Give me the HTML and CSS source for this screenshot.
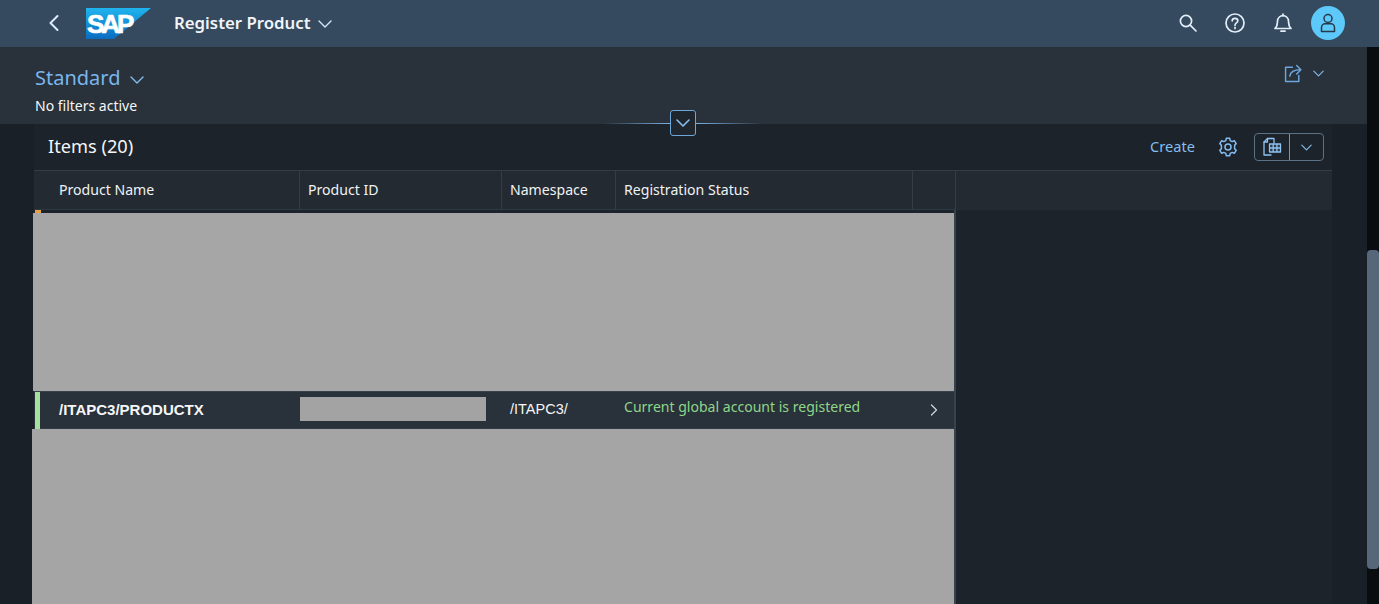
FILE: index.html
```html
<!DOCTYPE html>
<html lang="en">
<head>
<meta charset="UTF-8">
<meta name="viewport" content="width=device-width, initial-scale=1.0">
<title>Register Product</title>
<link rel="stylesheet" href="styles.css">
</head>
<body>
  <header class="shell">
    <div class="shell-left">
      <svg class="back-icon" viewBox="0 0 12 18"><path d="M9.5 2 L2.5 9 L9.5 16"/></svg>
      <svg class="sap-logo" viewBox="0 0 65 31">
        <defs>
          <linearGradient id="sapBlue" x1="0" y1="0" x2="0" y2="1">
            <stop offset="0" stop-color="#1fb4ee"/>
            <stop offset="1" stop-color="#0a6cc0"/>
          </linearGradient>
        </defs>
        <polygon points="0,0 65,0 28,31 0,31" fill="url(#sapBlue)"/>
        <text x="1" y="25" class="sap-text">SAP</text>
      </svg>
      <span class="app-title">Register Product</span>
      <svg class="chev chev-title" viewBox="0 0 14 8"><path d="M1 1 L7 7 L13 1"/></svg>
    </div>
    <div class="shell-right">
      <svg class="shell-icon" viewBox="0 0 20 20"><circle cx="8" cy="8" r="5.6"/><path d="M12.2 12.2 L18 18"/></svg>
      <svg class="shell-icon" viewBox="0 0 20 20"><circle cx="10" cy="10" r="9"/><path d="M7.2 7.8 C7.2 4.6 12.8 4.6 12.8 7.8 C12.8 10 10 9.8 10 12.2"/><path d="M10 14.4 L10 15.4"/></svg>
      <svg class="shell-icon" viewBox="0 0 20 20"><path d="M2 15.5 C4.5 13.5 4.2 11 4.5 8 C4.8 4.6 7.4 2.6 10 2.6 C12.6 2.6 15.2 4.6 15.5 8 C15.8 11 15.5 13.5 18 15.5 Z"/><path d="M8 18.2 L12 18.2"/><path d="M10 1 L10 2.6"/></svg>
      <div class="avatar">
        <svg class="avatar-icon" viewBox="0 0 16 20"><circle cx="8" cy="5.5" r="4"/><path d="M1.5 18.5 L1.5 14.5 C1.5 12 3.5 10.8 5 10.8 L11 10.8 C12.5 10.8 14.5 12 14.5 14.5 L14.5 18.5 Z"/></svg>
      </div>
    </div>
  </header>

  <div class="workarea">
    <main class="page">
      <section class="filterbar">
        <div class="variant">
          <div class="variant-row">
            <span class="variant-name">Standard</span>
            <svg class="chev chev-variant" viewBox="0 0 14 8"><path d="M1 1 L7 7 L13 1"/></svg>
          </div>
          <div class="filter-text">No filters active</div>
        </div>
        <div class="share">
          <svg class="share-icon" viewBox="0 0 18 18"><path d="M8 3 L1.5 3 L1.5 16.5 L14 16.5 L14 11"/><path d="M5.5 11.5 C6 7.5 9 5.5 15.5 5.5"/><path d="M12 1.5 L16 5.5 L12 9.5"/></svg>
          <svg class="chev chev-small" viewBox="0 0 14 8"><path d="M1 1 L7 7 L13 1"/></svg>
        </div>
        <div class="collapse">
          <span class="collapse-line collapse-line-left"></span>
          <button class="collapse-btn"><svg class="chev chev-collapse" viewBox="0 0 14 8"><path d="M1 1 L7 7 L13 1"/></svg></button>
          <span class="collapse-line collapse-line-right"></span>
        </div>
      </section>

      <section class="panel">
        <div class="toolbar">
          <h2 class="table-title">Items (20)</h2>
          <div class="toolbar-actions">
            <a class="create-link">Create</a>
            <svg class="gear-icon" viewBox="0 0 20 20">
              <circle cx="10" cy="10" r="3"/>
              <path d="M8.3 1.3 L11.7 1.3 L12.2 3.6 L14.2 4.6 L16.3 3.7 L18.2 6.6 L16.6 8.2 L16.6 11.8 L18.2 13.4 L16.3 16.3 L14.2 15.4 L12.2 16.4 L11.7 18.7 L8.3 18.7 L7.8 16.4 L5.8 15.4 L3.7 16.3 L1.8 13.4 L3.4 11.8 L3.4 8.2 L1.8 6.6 L3.7 3.7 L5.8 4.6 L7.8 3.6 Z"/>
            </svg>
            <div class="export-btn">
              <span class="export-main">
                <svg class="export-icon" viewBox="0 0 20 20">
                  <path d="M9 1.5 L5.5 1.5 L2 5 L2 18 L9 18"/>
                  <path d="M5.5 1.5 L5.5 5 L2 5"/>
                  <path d="M9 1.5 L12 1.5 L12 6"/>
                  <path class="export-grid" d="M7.5 7 L18.5 7 L18.5 15 L7.5 15 Z M7.5 11 L18.5 11 M11.2 7 L11.2 15 M14.9 7 L14.9 15"/>
                </svg>
              </span>
              <span class="export-arrow"><svg class="chev chev-small" viewBox="0 0 14 8"><path d="M1 1 L7 7 L13 1"/></svg></span>
            </div>
          </div>
        </div>

        <div class="table-head">
          <div class="th th-name">Product Name</div>
          <div class="th th-id">Product ID</div>
          <div class="th th-ns">Namespace</div>
          <div class="th th-status">Registration Status</div>
          <div class="th th-nav"></div>
        </div>

        <div class="table-body">
          <div class="table-col">
            <div class="hdr-gap"><span class="warn-tick"></span></div>
            <div class="redact redact-top"></div>
            <div class="row">
              <span class="row-mark"></span>
              <div class="td td-name">/ITAPC3/PRODUCTX</div>
              <div class="td td-id"><span class="redact-cell"></span></div>
              <div class="td td-ns">/ITAPC3/</div>
              <div class="td td-status">Current global account is registered</div>
              <div class="td td-nav"><svg class="nav-icon" viewBox="0 0 8 12"><path d="M1.5 1 L6.5 6 L1.5 11"/></svg></div>
            </div>
            <div class="redact redact-bottom"></div>
          </div>
        </div>
      </section>
    </main>
    <div class="scrollbar"><div class="scroll-thumb"></div></div>
  </div>
</body>
</html>
```

FILE: styles.css
```css
* {
  box-sizing: border-box;
}

body {
  display: flex;
  flex-direction: column;
  width: 1379px;
  height: 604px;
  margin: 0;
  overflow: hidden;
  background-color: #1a2027;
  color: #fff;
  font-family: "Noto Sans", Arial, sans-serif;
}

svg {
  display: block;
  fill: none;
  stroke-linecap: round;
  stroke-linejoin: round;
}

.chev {
  stroke: #d1e8ff;
  stroke-width: 1.4;
}

/* shell bar */
.shell {
  display: flex;
  justify-content: space-between;
  align-items: center;
  flex: none;
  height: 47px;
  padding: 0 34px 1px 48px;
  background-color: #354a5f;
}

.shell-left,
.shell-right {
  display: flex;
  align-items: center;
}

.back-icon {
  width: 12px;
  height: 18px;
  stroke: #dcecfb;
  stroke-width: 2;
}

.sap-logo {
  width: 65px;
  height: 31px;
  margin: 1px 0 0 26px;
}

.sap-text {
  fill: #fff;
  stroke: #fff;
  stroke-width: 0.7;
  font-family: "Liberation Sans", Arial, sans-serif;
  font-size: 26px;
  font-weight: 700;
  letter-spacing: -3px;
}

.app-title {
  margin: 0 0 2px 23px;
  font-size: 16.8px;
  font-weight: 600;
  color: #f2f5f8;
}

.chev-title {
  width: 14px;
  height: 8px;
  margin: 2px 0 0 8px;
}

.shell-right {
  gap: 27.5px;
}

.shell-icon {
  width: 20px;
  height: 20px;
  stroke: #e3eef8;
  stroke-width: 1.7;
}

.avatar {
  display: flex;
  justify-content: center;
  align-items: center;
  width: 34px;
  height: 34px;
  margin-left: -9px;
  border-radius: 50%;
  background-color: #5dc8fa;
}

.avatar-icon {
  width: 16px;
  height: 20px;
  stroke: #26384a;
  stroke-width: 1.5;
}

/* page */
.workarea {
  display: flex;
  flex: 1;
  min-height: 0;
}

.page {
  display: flex;
  flex-direction: column;
  flex: 1;
  min-width: 0;
}

.filterbar {
  position: relative;
  display: flex;
  justify-content: space-between;
  flex: none;
  height: 77px;
  padding: 17px 43px 0 35px;
  background-color: #29313a;
}

.variant-row {
  display: flex;
  align-items: center;
}

.variant-name {
  font-size: 20px;
  line-height: 28px;
  color: #7ab6ec;
}

.chev-variant {
  width: 14px;
  height: 8px;
  margin: 3px 0 0 10px;
  stroke: #84bdf0;
}

.filter-text {
  margin-top: 4px;
  font-size: 14px;
  line-height: 20px;
  color: #f5f6f7;
}

.share {
  display: flex;
  align-items: flex-start;
  gap: 10px;
}

.share-icon {
  width: 19px;
  height: 19px;
  stroke: #6ba7de;
  stroke-width: 1.4;
}

.chev-small {
  width: 11px;
  height: 7px;
  margin-top: 6px;
  stroke: #84bdf0;
}

/* sits over the border between filter bar and table */
.collapse {
  position: absolute;
  left: 603px;
  top: 63px;
  display: flex;
  align-items: center;
  width: 160px;
  height: 26px;
}

.collapse-line {
  flex: 1;
  height: 1px;
}

.collapse-line-left {
  background: linear-gradient(to right, rgba(122, 176, 226, 0), #7ab0e2);
}

.collapse-line-right {
  background: linear-gradient(to left, rgba(122, 176, 226, 0), #7ab0e2);
}

.collapse-btn {
  display: flex;
  justify-content: center;
  align-items: center;
  flex: none;
  width: 26px;
  height: 26px;
  padding: 0;
  border: 1px solid #6fa6d8;
  border-radius: 3px;
  background-color: #1f262e;
}

.chev-collapse {
  width: 14px;
  height: 8px;
  stroke: #84bdf0;
  stroke-width: 1.6;
}

/* table panel */
.panel {
  display: flex;
  flex-direction: column;
  flex: 1;
  min-height: 0;
  margin: 0 35px 0 34px;
  background-color: #1d232a;
}

.toolbar {
  display: flex;
  justify-content: space-between;
  align-items: center;
  flex: none;
  height: 47px;
  padding: 0 8px 2px 14px;
  border-bottom: 1px solid #333d47;
}

.table-title {
  margin: 0;
  font-size: 18.2px;
  font-weight: 400;
  color: #f5f6f7;
}

.toolbar-actions {
  display: flex;
  align-items: center;
}

.create-link {
  font-size: 14.6px;
  color: #84bdf0;
}

.gear-icon {
  width: 20px;
  height: 20px;
  margin: 2px 16px 0 23px;
  stroke: #84bdf0;
  stroke-width: 1.5;
}

.export-btn {
  display: flex;
  width: 70px;
  height: 28px;
  margin-top: 2px;
  border: 1px solid #5a7186;
  border-radius: 4px;
}

.export-main {
  display: flex;
  justify-content: center;
  align-items: center;
  width: 35px;
  border-right: 1px solid #7d93a8;
}

.export-icon {
  width: 20px;
  height: 20px;
  stroke: #8fc3f2;
  stroke-width: 1.3;
}

.export-grid {
  fill: #2c3947;
}

.export-arrow {
  display: flex;
  justify-content: center;
  flex: 1;
  padding-top: 4px;
}

.table-head {
  display: flex;
  flex: none;
  height: 39px;
  background-color: #232a31;
}

.th {
  display: flex;
  align-items: center;
  padding: 0 0 1px 8px;
  border-right: 1px solid #333d47;
  border-bottom: 1px solid #2f3943;
  font-size: 14.1px;
  color: #f0f2f4;
}

.th-name {
  width: 266px;
  padding-left: 25px;
}

.th-id {
  width: 202px;
}

.th-ns {
  width: 114px;
}

.th-status {
  width: 297px;
}

.th-nav {
  width: 43px;
}

.table-body {
  flex: 1;
  min-height: 0;
}

.table-col {
  display: flex;
  flex-direction: column;
  width: 922px;
  height: 100%;
  border-right: 2px solid #38424d;
}

.hdr-gap {
  flex: none;
  height: 3px;
}

.warn-tick {
  display: block;
  width: 6px;
  height: 3px;
  margin-left: 1px;
  background-color: #e8a33d;
}

.redact {
  margin-left: -1px;
  background-color: #a6a6a6;
}

.redact-top {
  flex: none;
  height: 178px;
}

.redact-bottom {
  flex: 1;
  margin-left: -2px;
  background-color: #a5a5a5;
}

.row {
  position: relative;
  display: flex;
  align-items: center;
  flex: none;
  height: 38px;
  background-color: #29313a;
  border-top: 1px solid #38424d;
  border-bottom: 1px solid #323c46;
}

.row-mark {
  position: absolute;
  left: 1px;
  top: 0;
  bottom: -1px;
  width: 5px;
  background-color: #a5e0a0;
}

.td {
  display: flex;
  align-items: center;
  height: 100%;
  padding-bottom: 2px;
  font-size: 14px;
  color: #f5f6f7;
}

.td-name {
  width: 266px;
  padding-left: 25px;
  font-family: "Liberation Sans", Arial, sans-serif;
  font-size: 15px;
  font-weight: 700;
}

.td-id {
  width: 202px;
}

.redact-cell {
  display: block;
  width: 186px;
  height: 24px;
  background-color: #a3a3a3;
}

.td-ns {
  width: 114px;
  padding-left: 8px;
  font-family: "Liberation Sans", Arial, sans-serif;
  font-size: 14.5px;
}

.td-status {
  width: 297px;
  padding: 0 0 8px 8px;
  font-size: 14.05px;
  color: #8fd68a;
}

.td-nav {
  justify-content: center;
  flex: 1;
  padding-bottom: 0;
}

.nav-icon {
  width: 8px;
  height: 12px;
  stroke: #c6d4e0;
  stroke-width: 1.3;
}

/* scrollbar */
.scrollbar {
  flex: none;
  width: 12px;
  padding-top: 203px;
  background-color: #0a0d10;
}

.scroll-thumb {
  width: 12px;
  height: 319px;
  border-radius: 4px;
  background-color: #566779;
}
```
